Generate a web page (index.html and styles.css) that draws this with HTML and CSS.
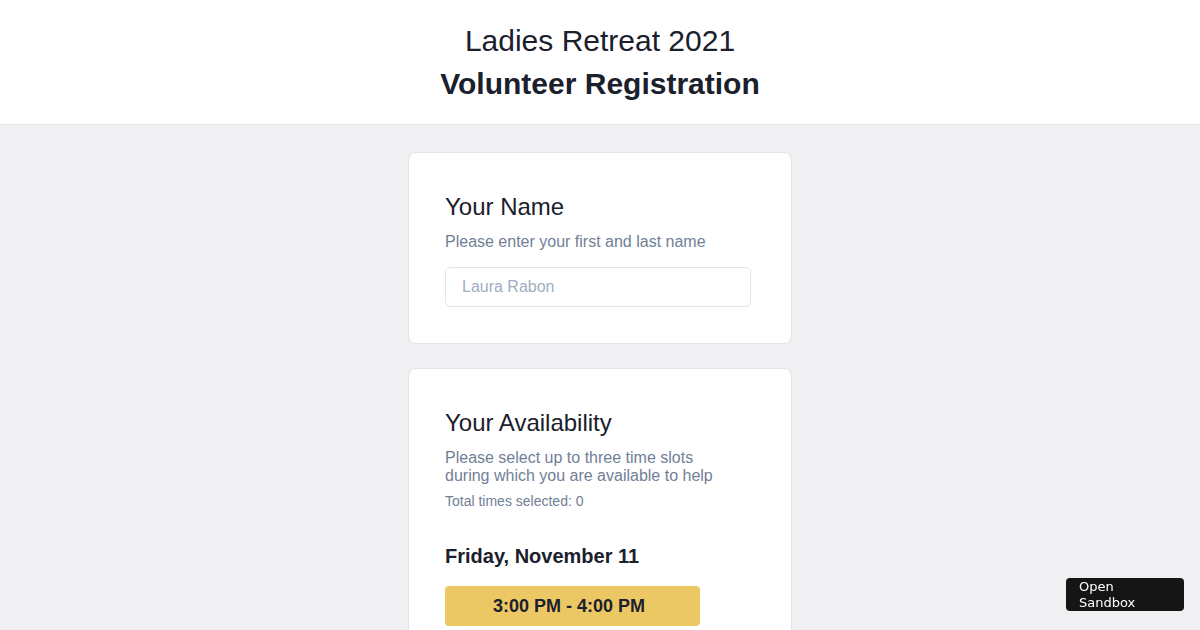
FILE: index.html
```html
<!DOCTYPE html>
<html lang="en">
<head>
    <meta charset="UTF-8">
    <meta name="viewport" content="width=device-width, initial-scale=1.0">
    <title>Volunteer Registration</title>
    <link rel="stylesheet" href="styles.css">
</head>
<body>
    <header class="page-header">
        <h1 class="event-title">Ladies Retreat 2021</h1>
        <h2 class="page-title">Volunteer Registration</h2>
    </header>

    <main class="form-wrap">
        <section class="card">
            <h3 class="card-title">Your Name</h3>
            <p class="card-desc">Please enter your first and last name</p>
            <input class="name-input" type="text" placeholder="Laura Rabon">
        </section>

        <section class="card">
            <h3 class="card-title">Your Availability</h3>
            <p class="card-desc narrow">Please select up to three time slots during which you are available to help</p>
            <p class="selected-count">Total times selected: <span id="count">0</span></p>

            <h4 class="day-title">Friday, November 11</h4>
            <div class="slots">
                <button class="slot">3:00 PM - 4:00 PM</button>
            </div>
        </section>
    </main>

    <a class="sandbox-btn" href="#">Open<br>Sandbox</a>
</body>
</html>
```

FILE: styles.css
```css
body {
    margin: 0;
    padding: 0;
    font-family: 'Liberation Sans', Arial, sans-serif;
    background: #f0f0f3;
    color: #1a202c;
}

.page-header {
    background: #fff;
    border-bottom: 1px solid #e2e4e9;
    padding: 18px 0 19px;
    text-align: center;
}

.event-title,
.page-title {
    margin: 0;
    font-size: 30px;
    color: #1a202c;
}

.event-title {
    font-weight: normal;
    line-height: 45px;
}

.page-title {
    font-weight: bold;
    line-height: 42px;
}

.form-wrap {
    width: 384px;
    margin: 0 auto;
    padding: 27px 0 40px;
    display: flex;
    flex-direction: column;
    gap: 24px;
}

.card {
    background: #fff;
    border: 1px solid #e2e5ea;
    border-radius: 8px;
    padding: 36px;
}

.card-title {
    margin: 0;
    font-size: 24px;
    line-height: 36px;
    font-weight: normal;
    color: #1a202c;
}

.card-desc {
    margin: 8px 0 0;
    font-size: 16px;
    line-height: 18px;
    color: #718096;
}

.card-desc.narrow {
    max-width: 285px;
}

.name-input {
    display: block;
    box-sizing: border-box;
    width: 306px;
    height: 40px;
    margin-top: 16px;
    padding: 0 16px;
    border: 1px solid #e2e5ea;
    border-radius: 5px;
    font-family: inherit;
    font-size: 16px;
    color: #1a202c;
    outline: none;
}

.name-input::placeholder {
    color: #a0aec0;
}

.selected-count {
    margin: 6px 0 0;
    font-size: 14px;
    line-height: 20px;
    color: #718096;
}

.day-title {
    margin: 31px 0 0;
    font-size: 20px;
    line-height: 28px;
    font-weight: bold;
    color: #1a202c;
}

.slots {
    margin-top: 16px;
    display: flex;
    flex-direction: column;
    gap: 12px;
}

.slot {
    width: 255px;
    height: 40px;
    padding: 0 7px 0 0;
    border: none;
    border-radius: 4px;
    background: #ecc865;
    color: #1a202c;
    font-family: inherit;
    font-size: 18px;
    font-weight: bold;
    cursor: pointer;
}

.slot:hover {
    background: #e6bd45;
}

.sandbox-btn {
    position: fixed;
    right: 16px;
    bottom: 19px;
    box-sizing: border-box;
    width: 118px;
    height: 33px;
    padding: 1px 13px;
    background: #151515;
    border-radius: 4px;
    color: #fff;
    font-family: 'DejaVu Sans', sans-serif;
    font-size: 13px;
    line-height: 16px;
    text-decoration: none;
}
```
